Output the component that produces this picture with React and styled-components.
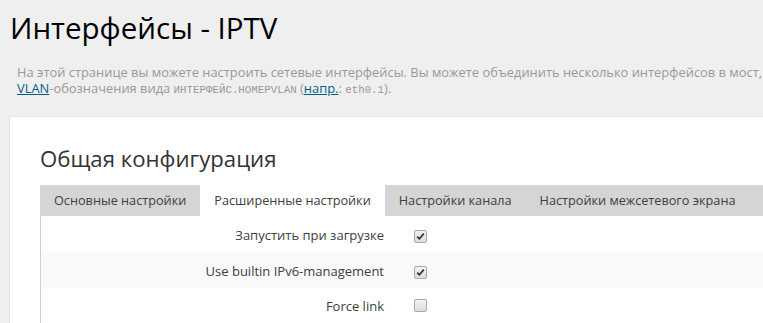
import React from 'react';
import styled, { createGlobalStyle } from 'styled-components';

const GlobalStyle = createGlobalStyle`
    html, body {
        margin: 0;
        padding: 0;
        background: #efefef;
        overflow: hidden;
    }
    body {
        font-family: "Open Sans", "Noto Sans", sans-serif;
        color: #404040;
    }
`

const Page = styled.div`
    width: 1100px;
    padding: 0 0 0 9px;
`

const Title = styled.h1`
    margin: 0;
    padding: 9px 0 0 1px;
    font-size: 29.5px;
    font-weight: 400;
    line-height: 38px;
    color: #000;
`

const Description = styled.div`
    margin: 17px 0 0 8px;
    font-size: 12.9px;
    color: #999;
    white-space: nowrap;

    a {
        color: #005f8a;
        text-decoration: underline;
    }

    code {
        font-family: "Liberation Mono", monospace;
        font-size: 10.8px;
        color: #999;
    }
`

const Line = styled.div`
    height: 16px;
    line-height: 16px;
`

const Card = styled.div`
    margin-top: 20px;
    background: #fff;
    border-left: 1px solid #e4e4e4;
    border-top: 1px solid #e8e8e8;
    padding: 26px 0 0 30px;
    min-height: 220px;
`

const SectionTitle = styled.h2`
    margin: 0 0 10px;
    font-size: 22.2px;
    font-weight: 400;
    line-height: 32px;
    color: #333;
`

const Tabs = styled.ul`
    display: flex;
    margin: 0;
    padding: 0;
    list-style: none;
    background: #d5d5d5;
    height: 31px;
`

const Tab = styled.li`
    padding: 0 14px;
    font-size: 12.7px;
    line-height: 31px;
    color: #404040;
    background: ${p => (p.$active ? '#fff' : 'transparent')};
    white-space: nowrap;
`

const Fields = styled.div`
    border-left: 1px solid #d0d0d0;
`

const Row = styled.div`
    display: grid;
    grid-template-columns: 343px auto;
    column-gap: 30px;
    align-items: center;
    height: ${p => p.$h}px;
    background: ${p => (p.$odd ? '#f9f9f9' : '#fff')};
`

const Label = styled.div`
    text-align: right;
    font-size: 13px;
    color: #404040;
`

const Box = styled.span`
    display: inline-flex;
    align-items: center;
    justify-content: center;
    width: 11px;
    height: 11px;
    border: 1px solid #a9a9a9;
    border-radius: 2px;
    background: linear-gradient(#f2f2f2, #dcdcdc);
`

const Check = ({ checked }) => (
    <Box>
        {checked && (
            <svg width="9" height="9" viewBox="0 0 9 9">
                <path d="M1.2 4.6 L3.4 6.8 L7.8 1.6" fill="none" stroke="#333" strokeWidth="1.7" />
            </svg>
        )}
    </Box>
)

const tabs = [
    'Основные настройки',
    'Расширенные настройки',
    'Настройки канала',
    'Настройки межсетевого экрана',
]

const fields = [
    { label: 'Запустить при загрузке', checked: true, h: 37 },
    { label: 'Use builtin IPv6-management', checked: true, h: 35 },
    { label: 'Force link', checked: false, h: 35 },
]

const App = () => {
    return (
        <>
            <GlobalStyle />
            <Page>
                <Title>Интерфейсы - IPTV</Title>
                <Description>
                    <Line>
                        На этой странице вы можете настроить сетевые интерфейсы. Вы можете объединить несколько интерфейсов в мост,
                    </Line>
                    <Line>
                        <a href="#">VLAN</a>-обозначения вида <code>ИНТЕРФЕЙС.НОМЕРVLAN</code> (<a href="#">напр.</a>: <code>eth0.1</code>).
                    </Line>
                </Description>
                <Card>
                    <SectionTitle>Общая конфигурация</SectionTitle>
                    <Tabs>
                        {tabs.map((t, i) => (
                            <Tab key={t} $active={i === 1}>{t}</Tab>
                        ))}
                    </Tabs>
                    <Fields>
                        {fields.map((f, i) => (
                            <Row key={f.label} $odd={i === 1} $h={f.h}>
                                <Label>{f.label}</Label>
                                <div><Check checked={f.checked} /></div>
                            </Row>
                        ))}
                    </Fields>
                </Card>
            </Page>
        </>
    );
};

export default App;
